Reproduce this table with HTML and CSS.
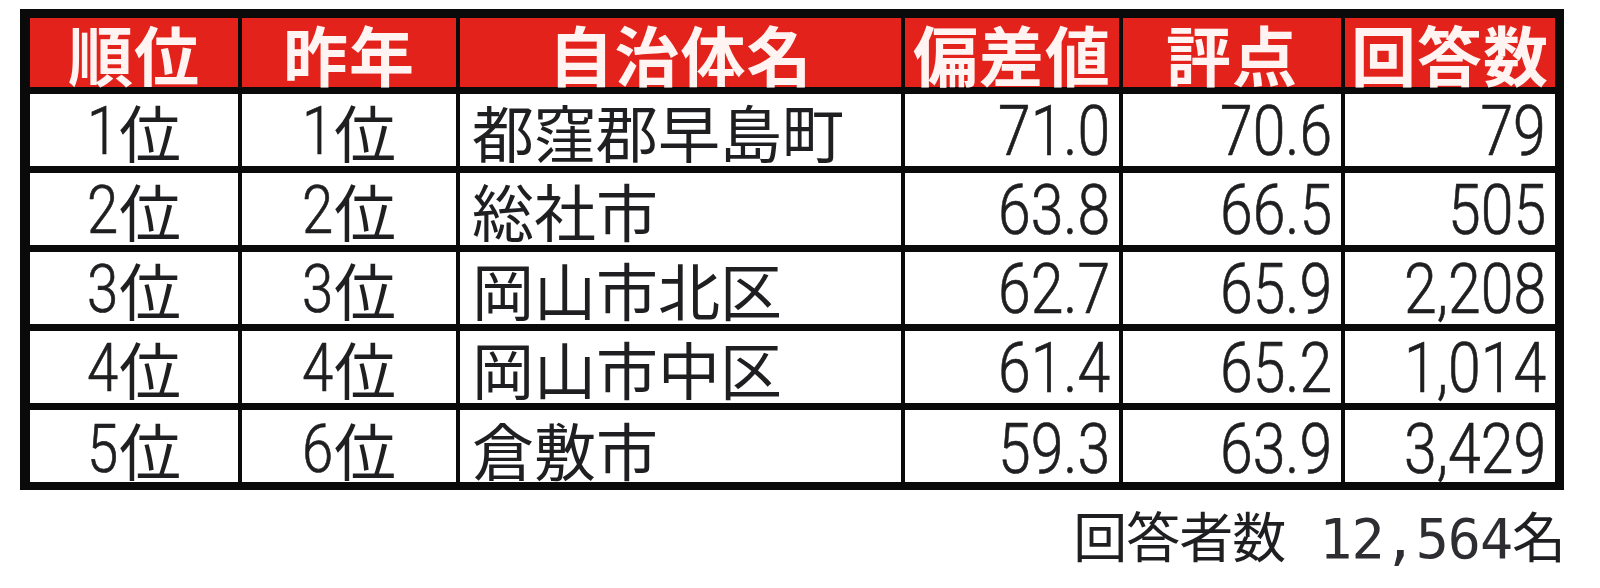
FILE: index.html
```html
<!DOCTYPE html>
<html lang="ja">
<head>
<meta charset="utf-8">
<title>ランキング</title>
<link rel="stylesheet" href="styles.css">
</head>
<body>
<div class="wrap">
  <div class="table">
    <div class="th">順位</div>
    <div class="th">昨年</div>
    <div class="th">自治体名</div>
    <div class="th">偏差値</div>
    <div class="th">評点</div>
    <div class="th">回答数</div>

    <div class="td rank"><span class="d">1</span>位</div>
    <div class="td rank"><span class="d">1</span>位</div>
    <div class="td name">都窪郡早島町</div>
    <div class="td num"><span class="n">71.0</span></div>
    <div class="td num"><span class="n">70.6</span></div>
    <div class="td num"><span class="n">79</span></div>

    <div class="td rank"><span class="d">2</span>位</div>
    <div class="td rank"><span class="d">2</span>位</div>
    <div class="td name">総社市</div>
    <div class="td num"><span class="n">63.8</span></div>
    <div class="td num"><span class="n">66.5</span></div>
    <div class="td num"><span class="n">505</span></div>

    <div class="td rank"><span class="d">3</span>位</div>
    <div class="td rank"><span class="d">3</span>位</div>
    <div class="td name">岡山市北区</div>
    <div class="td num"><span class="n">62.7</span></div>
    <div class="td num"><span class="n">65.9</span></div>
    <div class="td num"><span class="n">2,208</span></div>

    <div class="td rank"><span class="d">4</span>位</div>
    <div class="td rank"><span class="d">4</span>位</div>
    <div class="td name">岡山市中区</div>
    <div class="td num"><span class="n">61.4</span></div>
    <div class="td num"><span class="n">65.2</span></div>
    <div class="td num"><span class="n">1,014</span></div>

    <div class="td rank last"><span class="d">5</span>位</div>
    <div class="td rank last"><span class="d">6</span>位</div>
    <div class="td name last">倉敷市</div>
    <div class="td num last"><span class="n">59.3</span></div>
    <div class="td num last"><span class="n">63.9</span></div>
    <div class="td num last"><span class="n">3,429</span></div>
  </div>
  <div class="footer"><span class="flabel">回答者数</span><span class="fnum">12,564</span><span class="funit">名</span></div>
</div>
</body>
</html>
```

FILE: styles.css
```css
html, body {
  margin: 0;
  padding: 0;
  background: #ffffff;
}

body {
  font-family: "Noto Sans CJK JP", "Noto Sans", sans-serif;
  color: #1f1f22;
}

.wrap {
  padding: 9px 34px 0 20px;
  display: flex;
  flex-direction: column;
}

.table {
  display: grid;
  grid-template-columns: 208px 214px 441px 214px 218px 210px;
  grid-template-rows: 69px repeat(5, 72px);
  column-gap: 4px;
  row-gap: 7px;
  padding: 9px 9px 8px 10px;
  background: #0a0a0a;
  width: max-content;
}

.th {
  background: #e3231b;
  color: #fff4f2;
  font-weight: 700;
  font-size: 65px;
  line-height: 64px;
  display: flex;
  align-items: flex-end;
  justify-content: center;
  padding-bottom: 2px;
  letter-spacing: 1px;
}

.td {
  background: #ffffff;
  font-size: 62px;
  line-height: 62px;
  display: flex;
  align-items: flex-end;
  padding-bottom: 4px;
}

.rank {
  justify-content: center;
}

.d {
  display: inline-block;
  font-family: "Roboto", "Liberation Sans", sans-serif;
  font-weight: 300;
  font-size: 67px;
  -webkit-text-stroke: 0.7px currentColor;
  transform: scaleX(0.84);
  transform-origin: right bottom;
  margin-left: -6px;
  margin-right: 1px;
}

.name {
  justify-content: flex-start;
  padding-left: 12px;
}

.num {
  justify-content: flex-end;
  padding-right: 9px;
}

.n {
  display: inline-block;
  font-family: "Roboto", "Liberation Sans", sans-serif;
  font-weight: 300;
  font-size: 71px;
  -webkit-text-stroke: 0.7px currentColor;
  transform: scaleX(0.83);
  transform-origin: right bottom;
}

.last {
  padding-bottom: 2px;
}

.footer {
  align-self: flex-end;
  margin-top: 17px;
  font-size: 54px;
  line-height: 56px;
  color: #1f1f22;
  display: flex;
  align-items: baseline;
}

.flabel {
  letter-spacing: -1px;
}

.fnum {
  font-family: "DejaVu Sans Mono", "Liberation Mono", monospace;
  font-size: 55px;
  margin-left: 34px;
  letter-spacing: -1px;
  color: #2e2e32;
}

.funit {
  margin-left: 0;
}
```
